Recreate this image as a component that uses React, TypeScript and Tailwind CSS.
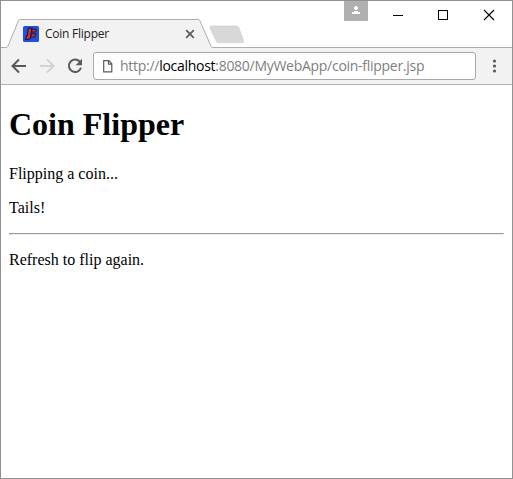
import React from "react";

function Favicon() {
  return (
    <svg width="16" height="16" viewBox="0 0 16 16" className="shrink-0">
      <rect width="16" height="16" rx="1.5" fill="#1f50e6" />
      <path d="M5.2 2.4L9 2L7.2 12.8L2.6 13.6L3.4 10L4.6 9.4Z" fill="#e8301c" stroke="#10143c" strokeWidth="1.1" />
      <path d="M9 3.4L13.2 3.2L12.8 5.8L8.8 6.2Z M8.4 8L12.6 7.8L12 10.8L7.8 11.2Z" fill="#e8301c" stroke="#10143c" strokeWidth=".9" />
    </svg>
  );
}

function TabStrip() {
  return (
    <header className="relative flex h-[47px] shrink-0 items-start">
      <svg className="absolute left-0 top-0" width="511" height="47" viewBox="1 1 511 47">
        <path d="M1 47.5H6.2Q7.4 47.5 7.9 46.3L18.4 20.8Q18.9 19.5 20.2 19.5H198Q199.3 19.5 199.9 20.8L211 46.2Q211.6 47.5 213 47.5H512V49H1Z" fill="#f2f2f2" stroke="#adadad" />
        <path d="M211 26H236.5Q238 26 238.7 27.3L243.7 40.5Q244.2 42.8 242.2 42.8H218.5Q217 42.8 216.3 41.3L210 28Q209.4 26 211 26Z" fill="#d8d8d8" stroke="#cccccc" strokeWidth=".6" />
      </svg>
      <div className="relative mt-[24px] ml-[22px] flex h-[17px] w-[172px] items-center">
        <Favicon />
        <span className="ml-[6px] whitespace-nowrap font-['Open_Sans',sans-serif] text-[12px] leading-4 tracking-[-0.25px] text-[#222]">Coin Flipper</span>
        <svg className="ml-auto" width="10" height="10" viewBox="0 0 10 10" stroke="#5a5a5a" strokeWidth="1.7">
          <path d="M1.2 1.2L8.8 8.8M8.8 1.2L1.2 8.8" />
        </svg>
      </div>
      <div className="relative ml-auto flex">
        <div className="flex h-[20px] w-[24px] justify-center bg-[#b0b0b0]">
          <svg width="24" height="20" viewBox="0 0 24 20" fill="#fff" shapeRendering="crispEdges">
            <path d="M11 5H13V6H14V8H13V9H11V8H10V6H11Z M10 10H14V11H16V13H8V11H10Z" />
          </svg>
        </div>
        <svg width="144" height="28" viewBox="368 1 144 28" fill="none" stroke="#000" shapeRendering="crispEdges">
          <path d="M393 15.5H403" />
          <rect x="438.5" y="10.5" width="9" height="9" />
          <path d="M484 10L494 20M494 10L484 20" shapeRendering="auto" strokeWidth="1.1" />
        </svg>
      </div>
    </header>
  );
}

function Toolbar() {
  return (
    <nav className="flex h-[37px] shrink-0 items-center border-b border-[#b0b0b0] bg-[#f2f2f2]">
      <svg width="92" height="36" viewBox="1 48 92 36" fill="none" stroke="#5a5a5a" strokeWidth="2">
        <path d="M26 66H13M19 59.5L12.5 66L19 72.5" />
        <path d="M40 66H53M47 59.5L53.5 66L47 72.5" stroke="#d2d2d2" />
        <path d="M79.8 61.7A6.2 6.2 0 1 0 81 67.8" />
        <path d="M82 58.8V65.2H75.6Z" fill="#5a5a5a" stroke="none" />
      </svg>
      <div className="flex h-[28px] w-[383px] items-center rounded-[3px] border border-[#a9a9a9] bg-white">
        <svg className="ml-[9px] shrink-0" width="10" height="13" viewBox="0 0 10 13" fill="none" stroke="#5a5a5a" strokeWidth="1.2">
          <path d="M.7 .7H5.8L8.8 3.8V11.8H.7Z M5.5 .7V4.1H8.8" />
        </svg>
        <span className="ml-[7px] whitespace-nowrap font-['Open_Sans',sans-serif] text-[14px] leading-5 tracking-[-0.28px] text-[#808080]">
          http://<span className="text-black">localhost</span>:8080/MyWebApp/coin-flipper.jsp
        </span>
      </div>
      <svg className="ml-[16px]" width="5" height="16" viewBox="0 0 5 16" fill="#5a5a5a">
        <circle cx="2.5" cy="3" r="1.6" />
        <circle cx="2.5" cy="8" r="1.6" />
        <circle cx="2.5" cy="13" r="1.6" />
      </svg>
    </nav>
  );
}

export default function App() {
  return (
    <div className="flex h-[479px] w-[513px] flex-col overflow-hidden border border-[#919191] bg-white">
      <TabStrip />
      <Toolbar />
      <main className="px-2 font-['Liberation_Serif',serif] text-base leading-[18px] text-black">
        <h1 className="mt-[21px] text-[32px] font-bold leading-[37px]">Coin Flipper</h1>
        <p className="mt-[22px]">Flipping a coin...</p>
        <p className="mt-4">Tails!</p>
        <hr className="my-4 h-[2px] border border-t-[#9a9a9a] border-r-[#eeeeee] border-b-[#eeeeee] border-l-[#9a9a9a]" />
        <p>Refresh to flip again.</p>
      </main>
    </div>
  );
}
